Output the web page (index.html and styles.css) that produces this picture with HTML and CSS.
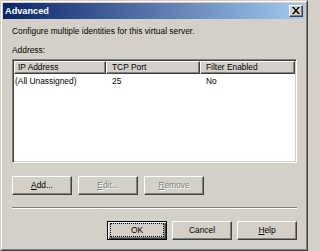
FILE: index.html
```html
<!DOCTYPE html>
<html>
<head>
<meta charset="utf-8">
<link rel="stylesheet" href="styles.css">
</head>
<body>
<div class="win">
  <div class="win-in">
    <div class="titlebar">
      <span class="title">Advanced</span>
      <span class="close"><svg width="8" height="7" viewBox="0 0 8 7"><path d="M0 0h2l2 2.5L6 0h2L5 3.5 8 7H6L4 4.5 2 7H0l3-3.5z" fill="#000"/></svg></span>
    </div>
    <div class="body">
      <div class="intro">Configure multiple identities for this virtual server.</div>
      <div class="label">Address:</div>
      <div class="list">
        <div class="hdr">
          <div class="hcell c1">IP Address</div>
          <div class="hcell c2">TCP Port</div>
          <div class="hcell c3">Filter Enabled</div>
          <div class="hfill"></div>
        </div>
        <div class="row">
          <div class="cell c1">(All Unassigned)</div>
          <div class="cell c2">25</div>
          <div class="cell c3">No</div>
        </div>
      </div>
      <div class="btnrow">
        <div class="btn"><span><u>A</u>dd...</span></div>
        <div class="btn disabled"><span><u>E</u>dit...</span></div>
        <div class="btn disabled"><span><u>R</u>emove</span></div>
      </div>
      <div class="sep"></div>
      <div class="btnrow bottom">
        <div class="btn default"><span class="focus">OK</span></div>
        <div class="btn"><span>Cancel</span></div>
        <div class="btn"><span><u>H</u>elp</span></div>
      </div>
    </div>
  </div>
</div>
</body>
</html>
```
FILE: styles.css
```css
* { box-sizing: border-box; }
html, body { margin: 0; padding: 0; background: #d4d0c8; }
body { font-family: "Liberation Sans", Arial, sans-serif; font-size: 8.4px; color: #000; }
.win {
  width: 308px; height: 251px;
  border-top: 1px solid #d4d0c8; border-left: 1px solid #d4d0c8;
  border-right: 1px solid #404040; border-bottom: 1px solid #404040;
  background: #d4d0c8;
}
.win-in {
  height: 100%;
  border-top: 1px solid #fff; border-left: 1px solid #fff;
  border-right: 1px solid #808080; border-bottom: 1px solid #808080;
  padding: 1px;
  display: flex; flex-direction: column;
}
.titlebar {
  height: 16px; flex: none;
  background: linear-gradient(to right, #0a246a, #a6caf0);
  display: flex; align-items: center; justify-content: space-between;
  padding: 0 2px 0 2px;
}
.title { color: #fff; font-weight: bold; font-size: 9.2px; }
.close {
  width: 14px; height: 12px;
  background: #d4d0c8;
  border-top: 1px solid #fff; border-left: 1px solid #fff;
  border-right: 1px solid #404040; border-bottom: 1px solid #404040;
  box-shadow: inset -1px -1px 0 #808080;
  display: flex; align-items: center; justify-content: center;
}
.close svg { display: block; margin-top: -1px; }
.body { flex: 1; padding: 6px 8px 0 9px; display: flex; flex-direction: column; }
.intro { line-height: 13px; height: 13px; }
.label { line-height: 13px; height: 13px; margin-top: 6px; }
.list {
  margin-top: 2px;
  height: 104px;
  background: #fff;
  border-top: 1px solid #808080; border-left: 1px solid #808080;
  border-right: 1px solid #fff; border-bottom: 1px solid #fff;
  box-shadow: inset 1px 1px 0 #404040, inset -1px -1px 0 #d4d0c8;
  padding: 1px;
}
.hdr { display: flex; height: 13px; background: #d4d0c8; }
.hcell {
  height: 13px; line-height: 11px;
  border-top: 1px solid #fff; border-left: 1px solid #fff;
  border-right: 1px solid #404040; border-bottom: 1px solid #404040;
  box-shadow: inset -1px -1px 0 #808080;
  padding-left: 5px; white-space: nowrap; overflow: hidden;
}
.hcell.c1 { padding-left: 3px; }
.hfill { flex: 1; }
.c1 { width: 92px; }
.c2 { width: 94px; }
.c3 { width: 95px; }
.row { display: flex; height: 13px; line-height: 13px; margin-top: 1px; }
.cell { padding-left: 6px; white-space: nowrap; }
.cell.c1 { padding-left: 1px; }
.btnrow { display: flex; gap: 6px; margin-top: 13px; }
.btn {
  width: 60px; height: 19px;
  background: #d4d0c8;
  border-top: 1px solid #fff; border-left: 1px solid #fff;
  border-right: 1px solid #404040; border-bottom: 1px solid #404040;
  box-shadow: inset -1px -1px 0 #808080;
  display: flex; align-items: center; justify-content: center;
  line-height: 11px;
}
.btn.disabled { color: #808080; text-shadow: 1px 1px 0 #fff; }
.btn.default {
  border: 1px solid #000;
  box-shadow: inset 1px 1px 0 #fff, inset -1px -1px 0 #404040, inset -2px -2px 0 #808080;
}
.focus {
  width: 54px; height: 14px; margin-top: -1px;
  border: 1px dotted #000;
  display: flex; align-items: center; justify-content: center;
}
.sep { margin-top: 12px; height: 2px; border-top: 1px solid #808080; border-bottom: 1px solid #fff; }
.btnrow.bottom { justify-content: flex-end; gap: 5px; margin-top: 12px; }
u { text-decoration: underline; text-underline-offset: 1px; }
```
